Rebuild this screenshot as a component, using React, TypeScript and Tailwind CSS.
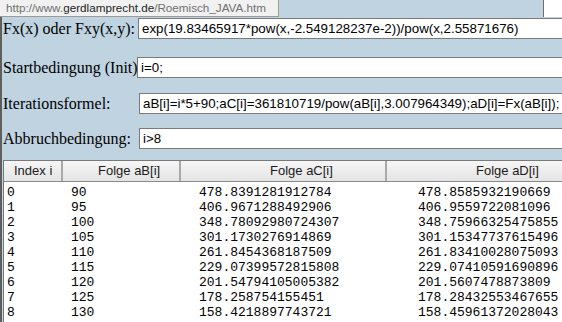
import React from "react";

const rows: [string, string, string, string][] = [
  ["0", "90", "478.8391281912784", "478.8585932190669"],
  ["1", "95", "406.9671288492906", "406.9559722081096"],
  ["2", "100", "348.78092980724307", "348.75966325475855"],
  ["3", "105", "301.1730276914869", "301.15347737615496"],
  ["4", "110", "261.8454368187509", "261.83410028075093"],
  ["5", "115", "229.07399572815808", "229.07410591690896"],
  ["6", "120", "201.54794105005382", "201.5607478873809"],
  ["7", "125", "178.258754155451", "178.28432553467655"],
  ["8", "130", "158.4218897743721", "158.45961372028043"],
];

function Field({ label, value, labelW, mt }: { label: string; value: string; labelW: string; mt: string }) {
  return (
    <div className={`flex items-center h-[21px] ${mt}`}>
      <div className={`${labelW} shrink-0 text-[16px] leading-[18px] text-black whitespace-nowrap font-['Liberation_Serif',serif]`}>{label}</div>
      <div className="h-[21px] flex-1 min-w-0 bg-white border border-r-0 border-[#7a7a7a] pl-[3px] flex items-center overflow-hidden whitespace-nowrap text-[13.33px] leading-[16px] text-black font-['Liberation_Sans',sans-serif]">
        {value}
      </div>
    </div>
  );
}

export default function App() {
  return (
    <div className="w-[562px] h-[322px] overflow-hidden relative bg-[#bfd3e1]">
      <div className="h-full border-l-2 border-[#5e5e5e] pl-px flex flex-col">
        <div className="h-[18px] flex justify-end shrink-0">
          <div className="w-[19px] h-[17px] bg-white border-l border-[#6e6e6e]" />
        </div>
        <Field label="Fx(x) oder Fxy(x,y):" value="exp(19.83465917*pow(x,-2.549128237e-2))/pow(x,2.55871676)" labelW="w-[135px]" mt="mt-0" />
        <Field label="Startbedingung (Init)" value="i=0;" labelW="w-[134px]" mt="mt-[18px]" />
        <Field label="Iterationsformel:" value="aB[i]=i*5+90;aC[i]=361810719/pow(aB[i],3.007964349);aD[i]=Fx(aB[i]);" labelW="w-[136px]" mt="mt-[15px]" />
        <Field label="Abbruchbedingung:" value="i>8" labelW="w-[136px]" mt="mt-[14px]" />
        <div className="mt-[11px] flex-1 bg-white border-l border-t border-[#7a7a7a] flex flex-col">
          <div className="h-[21px] shrink-0 flex border-b border-[#8a8a8a] bg-gradient-to-b from-[#f6f6f6] to-[#e4e4e4] text-[13px] leading-[16px] text-[#1a1a1a] font-['Liberation_Sans',sans-serif] whitespace-nowrap">
            <div className="w-[59px] shrink-0 pl-[10px] flex items-center border-r-2 border-[#a8a8a8]">Index i</div>
            <div className="w-[118px] shrink-0 pl-[35px] flex items-center border-r-2 border-[#a8a8a8]">Folge aB[i]</div>
            <div className="w-[206px] shrink-0 pl-[89px] flex items-center border-r-2 border-[#a8a8a8]">Folge aC[i]</div>
            <div className="flex-1 pl-[89px] flex items-center">Folge aD[i]</div>
          </div>
          <div className="pt-[3px] pl-[3px] font-['Liberation_Mono',monospace] text-[13px] leading-[15px] text-black whitespace-nowrap">
            {rows.map((r) => (
              <div key={r[0]} className="grid grid-cols-[64px_128px_219px_1fr]">
                <span>{r[0]}</span>
                <span>{r[1]}</span>
                <span>{r[2]}</span>
                <span>{r[3]}</span>
              </div>
            ))}
          </div>
        </div>
      </div>
      <div className="absolute left-0 top-0 h-[17px] w-[279px] bg-[#f1f1f1] border-b border-r border-[#9a9a9a] pl-[6px] flex items-center text-[11.7px] leading-[14px] text-[#707070] whitespace-nowrap font-['Liberation_Sans',sans-serif]">
        http://www.<span className="text-[#1e1e1e]">gerdlamprecht.de</span>/Roemisch_JAVA.htm
      </div>
    </div>
  );
}
